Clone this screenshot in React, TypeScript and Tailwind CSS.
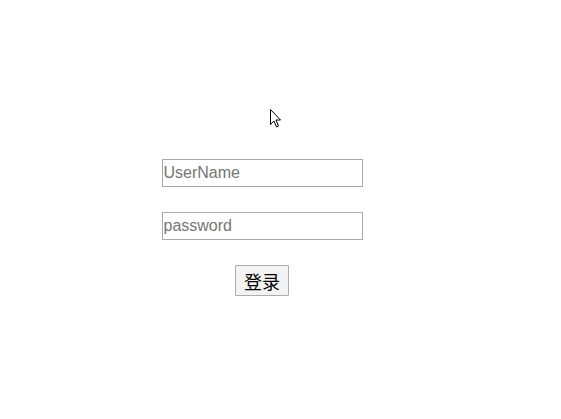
export default function App() {
  return (
    <div className="relative w-[561px] h-[419px] bg-white font-['Liberation_Sans',Arial,sans-serif]">
      <div className="w-[524px] pt-[159px] flex flex-col items-center">
        <input
          type="text"
          placeholder="UserName"
          className="w-[201px] h-[28px] border border-[#a9a9a9] px-[1px] text-[16px] text-black placeholder:text-[#757575] outline-none"
        />
        <input
          type="password"
          placeholder="password"
          className="mt-[25px] w-[201px] h-[28px] border border-[#a9a9a9] px-[1px] text-[16px] text-black placeholder:text-[#757575] outline-none"
        />
        <button className="mt-[25px] w-[54px] h-[31px] border border-[#adadad] bg-[#f3f3f3] rounded-[1px] text-[18px] leading-none text-black font-['Noto_Sans_CJK_SC',sans-serif]">
          登录
        </button>
      </div>

      {/* mouse pointer */}
      <svg
        className="absolute left-[269px] top-[108px]"
        width="13"
        height="21"
        viewBox="0 0 13 21"
      >
        <path
          d="M1.5 1.5 L1.5 16.5 L5 13 L7.5 19 L9.5 18 L7 12 L11.5 12 Z"
          fill="white"
          stroke="black"
          strokeWidth="1"
          strokeLinejoin="miter"
        />
      </svg>
    </div>
  );
}
